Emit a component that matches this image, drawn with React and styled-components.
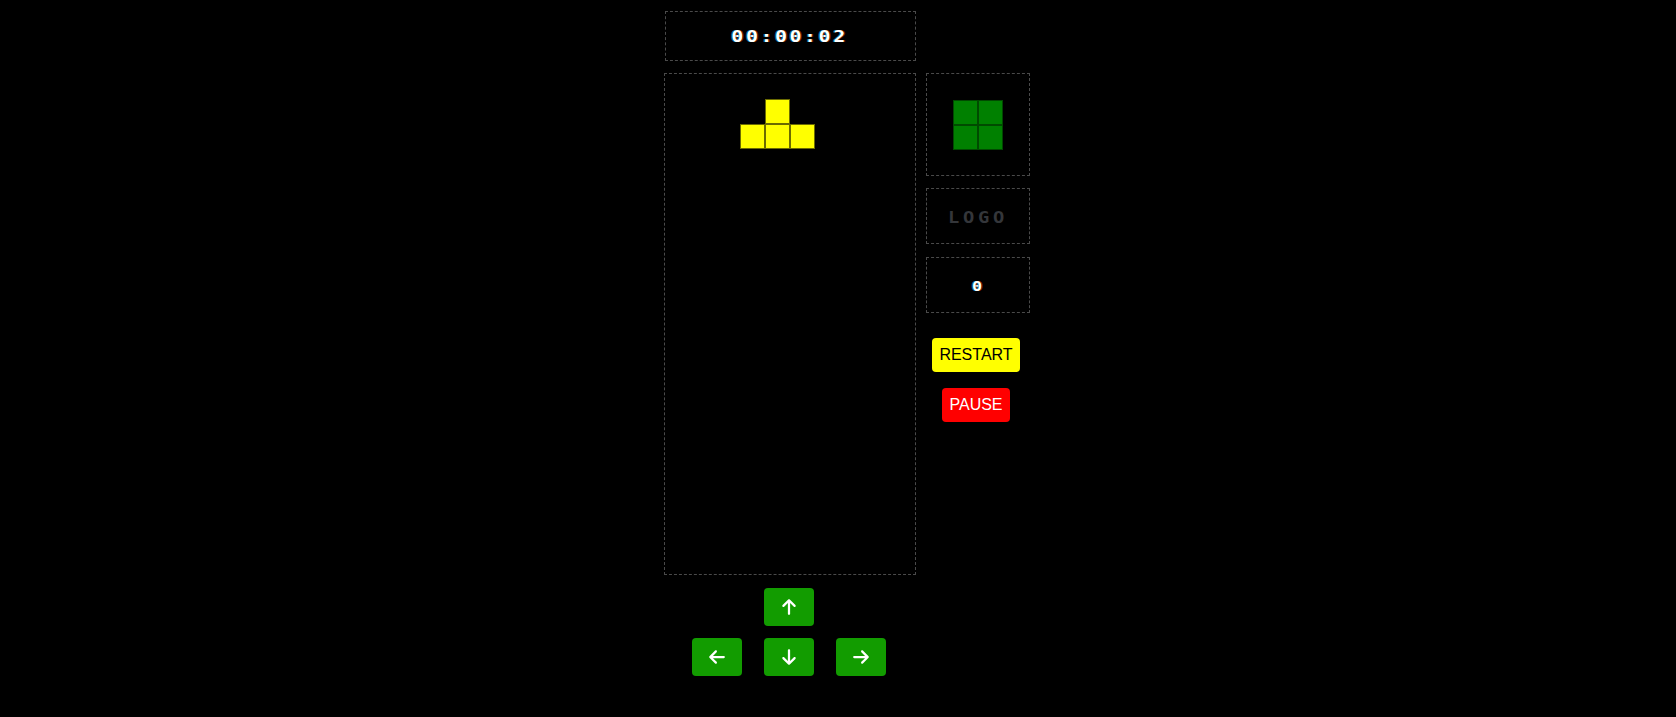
import React from "react";
import styled, { createGlobalStyle } from "styled-components";
import { FaArrowUp, FaArrowDown, FaArrowLeft, FaArrowRight } from "react-icons/fa6";

const GlobalStyle = createGlobalStyle`
  html, body {
    margin: 0;
    padding: 0;
    background: #000;
  }
  body {
    font-family: "Liberation Sans", Arial, sans-serif;
    min-height: 717px;
  }
`;

const Page = styled.div`
  display: flex;
  justify-content: center;
  padding-top: 11px;
`;

const Game = styled.div`
  display: grid;
  grid-template-columns: 252px 104px;
  column-gap: 10px;
  padding-left: 18px;
`;

const MainColumn = styled.div`
  display: flex;
  flex-direction: column;
  align-items: center;
`;

const pixelText = `
  font-family: "DejaVu Sans Mono", "Liberation Mono", monospace;
  font-weight: bold;
`;

const Timer = styled.div`
  box-sizing: border-box;
  width: 251px;
  height: 50px;
  border: 1px dashed #4a4a4a;
  display: flex;
  align-items: center;
  justify-content: center;
  margin-bottom: 12px;
`;

const PixelLabel = styled.span`
  ${pixelText}
  display: inline-block;
  color: ${(p) => p.$color || "#fff"};
  font-size: ${(p) => p.$size || 16}px;
  letter-spacing: ${(p) => p.$spacing || 2}px;
  margin-top: ${(p) => p.$mt || 0}px;
  transform: scaleX(${(p) => p.$stretch || 1.25});
  text-shadow: ${(p) =>
    p.$fringe ? "-1px 0 rgba(0, 190, 255, 0.55), 1px 0 rgba(255, 80, 0, 0.45)" : "none"};
`;

const Board = styled.div`
  box-sizing: border-box;
  width: 252px;
  height: 502px;
  border: 1px dashed #4a4a4a;
  display: grid;
  grid-template-columns: repeat(10, 25px);
  grid-template-rows: repeat(20, 25px);
`;

const Cell = styled.div`
  box-sizing: border-box;
  width: 25px;
  height: 25px;
  background: ${(p) => (p.$color === "yellow" ? "#ffff00" : p.$color === "green" ? "#008000" : "transparent")};
  border: ${(p) =>
    p.$color === "yellow"
      ? "1px solid #6b6b00"
      : p.$color === "green"
      ? "1px solid #004a00"
      : "none"};
`;

const Controls = styled.div`
  display: flex;
  flex-direction: column;
  align-items: center;
  gap: 12px;
  margin-top: 13px;
  margin-left: -2px;
`;

const ControlRow = styled.div`
  display: flex;
  gap: 22px;
`;

const ArrowButton = styled.button`
  width: 50px;
  height: 38px;
  border: none;
  border-radius: 4px;
  background: #129c00;
  color: #fff;
  display: flex;
  align-items: center;
  justify-content: center;
  padding: 0;
  font-size: 18px;
  cursor: pointer;
`;

const SideColumn = styled.div`
  display: flex;
  flex-direction: column;
  align-items: center;
  padding-top: 62px;
`;

const Panel = styled.div`
  box-sizing: border-box;
  width: 104px;
  height: ${(p) => p.$h}px;
  border: 1px dashed #4a4a4a;
  display: flex;
  align-items: center;
  justify-content: center;
  margin-bottom: ${(p) => p.$mb}px;
`;

const NextGrid = styled.div`
  display: grid;
  grid-template-columns: repeat(2, 25px);
  grid-template-rows: repeat(2, 25px);
`;

const ActionButton = styled.button`
  font-family: "Liberation Sans", Arial, sans-serif;
  font-size: 16px;
  padding: 8px 7px;
  border: none;
  border-radius: 4px;
  background: ${(p) => p.$bg};
  color: ${(p) => p.$fg};
  margin-left: -4px;
  margin-bottom: 16px;
  cursor: pointer;
`;

const piece = { "1-4": 1, "2-3": 1, "2-4": 1, "2-5": 1 };

const App = () => {
  const cells = [];
  for (let r = 0; r < 20; r++) {
    for (let c = 0; c < 10; c++) {
      cells.push(<Cell key={`${r}-${c}`} $color={piece[`${r}-${c}`] ? "yellow" : null} />);
    }
  }

  return (
    <>
      <GlobalStyle />
      <Page>
        <Game>
          <MainColumn>
            <Timer>
              <PixelLabel $fringe>00:00:02</PixelLabel>
            </Timer>
            <Board>{cells}</Board>
            <Controls>
              <ArrowButton>
                <FaArrowUp />
              </ArrowButton>
              <ControlRow>
                <ArrowButton>
                  <FaArrowLeft />
                </ArrowButton>
                <ArrowButton>
                  <FaArrowDown />
                </ArrowButton>
                <ArrowButton>
                  <FaArrowRight />
                </ArrowButton>
              </ControlRow>
            </Controls>
          </MainColumn>
          <SideColumn>
            <Panel $h={103} $mb={12}>
              <NextGrid>
                <Cell $color="green" />
                <Cell $color="green" />
                <Cell $color="green" />
                <Cell $color="green" />
              </NextGrid>
            </Panel>
            <Panel $h={56} $mb={13}>
              <PixelLabel $color="#34363a" $size={15} $spacing={3} $mt={4}>
                LOGO
              </PixelLabel>
            </Panel>
            <Panel $h={56} $mb={25}>
              <PixelLabel $size={14} $spacing={0} $stretch={1.2} $mt={1} $fringe>
                0
              </PixelLabel>
            </Panel>
            <ActionButton $bg="#ffff00" $fg="#000">
              RESTART
            </ActionButton>
            <ActionButton $bg="#ff0000" $fg="#fff">
              PAUSE
            </ActionButton>
          </SideColumn>
        </Game>
      </Page>
    </>
  );
};

export default App;
